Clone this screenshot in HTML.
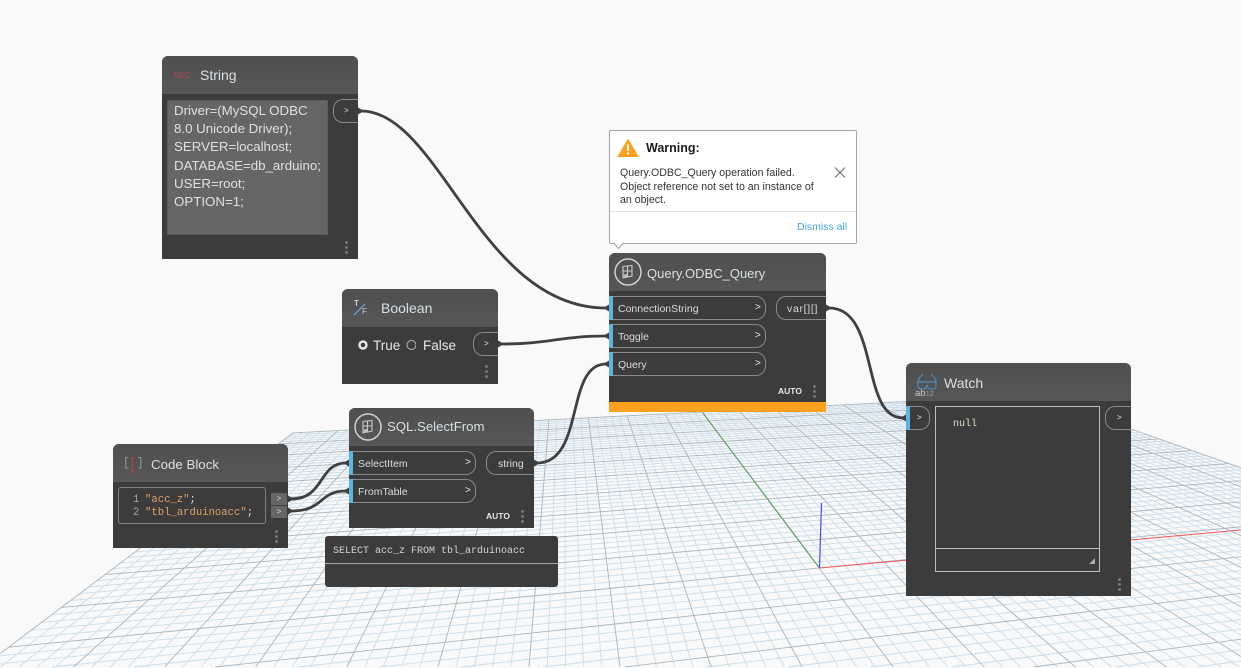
<!DOCTYPE html>
<html><head><meta charset="utf-8">
<style>
html,body{margin:0;padding:0;background:#f9f9f9;width:1241px;height:668px;overflow:hidden}
#r{position:relative;width:1241px;height:668px;overflow:hidden;background:#f9f9f9;font-family:"Liberation Sans",sans-serif}
svg.full{position:absolute;left:0;top:0}
.n{position:absolute;background:#3c3c3c}
.h{position:absolute;left:0;right:0;top:0;height:38px;background:linear-gradient(#4f4f4f,#575757);border-radius:6px 6px 0 0}
.t{position:absolute;white-space:nowrap;line-height:16px;height:16px;color:#d6dde2}
.title{font-size:14px;color:#d9dfe3}
.m{font-family:"Liberation Mono",monospace}
.p{position:absolute;box-sizing:border-box;border:1px solid #8a8a8a;height:24px;background:#3c3c3c}
.in{border-left:0;border-radius:0 10px 10px 0}
.in:before{content:"";position:absolute;left:0;top:-1px;bottom:-1px;width:4px;background:#5cb4e2}
.out{border-right:0;border-radius:10px 0 0 10px}
.p span{position:absolute;white-space:nowrap;color:#d8dde0;font-size:10.5px;line-height:24px;top:0}
.p i{position:absolute;font-style:normal;color:#e4e4e4;font-size:10px;line-height:22px;top:0}
.d{position:absolute;width:3px;height:3px;border-radius:50%;background:#777;box-shadow:0 5px 0 #777,0 10px 0 #777}
.auto{position:absolute;color:#e6e6e6;font-size:8.5px;font-weight:bold;line-height:10px}
</style></head>
<body><div id="r">
<svg class="full" id="g" width="1241" height="668" viewBox="0 0 1241 668" fill="none"></svg>
<svg class="full" width="1241" height="668" viewBox="0 0 1241 668" fill="none">
<path d="M819.5 568L703 413" stroke="#4f9a4f" stroke-width="1"/>
<path d="M819.5 568L1241 530" stroke="#f4565a" stroke-width="1"/>
<path d="M819.5 568L821.5 503" stroke="#4a4ae8" stroke-width="1.2"/>
</svg>

<div class="n" style="left:162px;top:56px;width:196px;height:203px;border-radius:6px 6px 0 0">
<div class="h"></div>
<div class="t" style="left:10px;top:11px;font-size:8.5px;font-weight:bold;color:#8e4d50">ABC</div>
<div class="t title" style="left:38px;top:11px;font-size:14px">String</div>
<div style="position:absolute;left:5px;top:44px;width:161px;height:135px;box-sizing:border-box;background:#666;border:1px solid #5b5b5b"></div>
<div style="position:absolute;left:12px;top:46px;font-size:13.3px;line-height:18.2px;color:#dde0e2;white-space:nowrap">Driver=(MySQL ODBC<br>8.0 Unicode Driver);<br>SERVER=localhost;<br>DATABASE=db_arduino;<br>USER=root;<br>OPTION=1;</div>
<div class="p out" style="left:171px;top:43px;width:25px"><i style="left:10px;font-size:8px">&gt;</i></div>
<div class="d" style="left:183px;top:185px"></div>
</div>

<div style="position:absolute;left:609px;top:130px;width:248px;height:114px;box-sizing:border-box;background:#fff;border:1px solid #a3a3a3;border-radius:2px"></div>
<svg class="full" width="1241" height="668" viewBox="0 0 1241 668" fill="none">
<path d="M614 243.5L618.5 248.5L623 243.5" fill="#fff" stroke="#a3a3a3"/><path d="M615 243h7v1h-7z" fill="#fff"/>
<path d="M628 139.5L638 156.5H618Z" fill="#fca21f" stroke="#fca21f" stroke-linejoin="round"/>
<path d="M628 144.5v6.5M628 152.5v2" stroke="#fff" stroke-width="2"/>
<path d="M835 167.5L845 177.5M845 167.5L835 177.5" stroke="#666" stroke-width="1"/>
<path d="M610 211.5H856" stroke="#e2e2e2"/>
</svg>
<div class="t" style="left:646px;top:140px;font-size:12.5px;font-weight:bold;color:#1c1c1c">Warning:</div>
<div style="position:absolute;left:620px;top:167px;font-size:10.6px;line-height:13.6px;color:#333;white-space:nowrap">Query.ODBC_Query operation failed.<br>Object reference not set to an instance of<br>an object.</div>
<div class="t" style="left:797px;top:219px;font-size:10.5px;color:#4aa5e0">Dismiss all</div>

<div class="n" style="left:609px;top:253px;width:217px;height:159px;border-radius:6px 6px 0 0">
<div class="h"></div>
<svg style="position:absolute;left:5px;top:5px" width="28" height="28" viewBox="0 0 28 28" fill="none"><circle cx="14" cy="14" r="13" stroke="#d0d0d0" stroke-width="1.5"/><path d="M9 8.5L18 7.5V18L9 20ZM13.5 8V19M9 13H18" stroke="#c9c9c9" stroke-width="1.1"/><path d="M9 16.5L13 16V19.5L9 20Z" fill="#bbb"/></svg>
<div class="t title" style="left:38px;top:13px;font-size:13px">Query.ODBC_Query</div>
<div class="p in" style="left:0;top:43px;width:157px"><span style="left:9px">ConnectionString</span><i style="left:146px">&gt;</i></div>
<div class="p in" style="left:0;top:71px;width:157px"><span style="left:9px">Toggle</span><i style="left:146px">&gt;</i></div>
<div class="p in" style="left:0;top:99px;width:157px"><span style="left:9px">Query</span><i style="left:146px">&gt;</i></div>
<div class="p out" style="left:167px;top:43px;width:50px"><span style="left:10px;letter-spacing:.7px">var[][]</span></div>
<div class="auto" style="left:169px;top:133px">AUTO</div>
<div class="d" style="left:204px;top:132px"></div>
<div style="position:absolute;left:0;right:0;bottom:0;height:10px;background:#fca21f"></div>
</div>

<div class="n" style="left:342px;top:289px;width:156px;height:95px;border-radius:6px 6px 0 0">
<div class="h"></div>
<div class="t" style="left:12px;top:7px;font-size:8px;font-weight:bold;color:#ccc">T</div>
<svg style="position:absolute;left:10px;top:9px" width="24" height="24" fill="none"><path d="M2 17L13 6" stroke="#6d9ec0" stroke-width="1.3"/></svg>
<div class="t" style="left:20px;top:15px;font-size:8px;font-weight:bold;color:#aaa">F</div>
<div class="t title" style="left:39px;top:11px">Boolean</div>
<svg style="position:absolute;left:14px;top:48px" width="60" height="16" fill="none"><circle cx="7" cy="8" r="3.5" stroke="#e6e6e6" stroke-width="2.4"/><circle cx="55.5" cy="8" r="4.5" stroke="#bbb"/></svg>
<div class="t" style="left:31px;top:49px;font-size:13.5px;color:#e2e6e9">True</div>
<div class="t" style="left:81px;top:49px;font-size:13.5px;color:#e2e6e9">False</div>
<div class="p out" style="left:131px;top:43px;width:25px"><i style="left:10px;font-size:8px">&gt;</i></div>
<div class="d" style="left:143px;top:76px"></div>
</div>

<div class="n" style="left:113px;top:444px;width:175px;height:104px;border-radius:6px 6px 0 0">
<div class="h"></div>
<div class="t m" style="left:10px;top:12px;font-size:11.5px;color:#9a9a9a">[ ]</div>
<svg style="position:absolute;left:14px;top:10px" width="12" height="20" fill="none"><path d="M5.5 4V18M3.5 4H7.5M3.5 18H7.5" stroke="#b04347" stroke-width="1.2"/></svg>
<div class="t title" style="left:38px;top:13px;font-size:13.3px">Code Block</div>
<div style="position:absolute;left:5px;top:43px;width:148px;height:37px;box-sizing:border-box;border:1px solid #808080;border-radius:3px"></div>
<div style="position:absolute;left:20px;top:50px;font:10.6px/13px 'Liberation Mono',monospace;color:#a5a5a5;white-space:pre;text-align:right">1<br>2</div>
<div style="position:absolute;left:32px;top:50px;font:10.6px/13px 'Liberation Mono',monospace;color:#e0a066;white-space:pre">"acc_z"<span style="color:#ddd">;</span><br>"tbl_arduinoacc"<span style="color:#ddd">;</span></div>
<div style="position:absolute;left:158px;top:49px;width:16px;height:12px;background:#666;color:#ddd;font-size:8px;line-height:11px;text-align:center">&gt;</div>
<div style="position:absolute;left:158px;top:62px;width:16px;height:12px;background:#666;color:#ddd;font-size:8px;line-height:11px;text-align:center">&gt;</div>
<div class="d" style="left:162px;top:86px"></div>
</div>

<div class="n" style="left:349px;top:408px;width:185px;height:120px;border-radius:6px 6px 0 0">
<div class="h"></div>
<svg style="position:absolute;left:5px;top:5px" width="28" height="28" viewBox="0 0 28 28" fill="none"><circle cx="14" cy="14" r="13" stroke="#d0d0d0" stroke-width="1.5"/><path d="M9 8.5L18 7.5V18L9 20ZM13.5 8V19M9 13H18" stroke="#c9c9c9" stroke-width="1.1"/><path d="M9 16.5L13 16V19.5L9 20Z" fill="#bbb"/></svg>
<div class="t title" style="left:38px;top:11px;font-size:13.2px">SQL.SelectFrom</div>
<div class="p in" style="left:0;top:43px;width:127px"><span style="left:9px">SelectItem</span><i style="left:116px">&gt;</i></div>
<div class="p in" style="left:0;top:71px;width:127px"><span style="left:9px">FromTable</span><i style="left:116px">&gt;</i></div>
<div class="p out" style="left:137px;top:43px;width:48px"><span style="left:11px">string</span></div>
<div class="auto" style="left:137px;top:103px">AUTO</div>
<div class="d" style="left:172px;top:102px"></div>
</div>

<div class="n" style="left:325px;top:536px;width:233px;height:51px;border-radius:3px">
<div class="t m" style="left:8px;top:8px;font-size:10px;color:#cfd5d9">SELECT acc_z FROM tbl_arduinoacc</div>
<div style="position:absolute;left:0;right:0;top:27px;height:1px;background:#a5a5a5"></div>
</div>

<div class="n" style="left:906px;top:363px;width:225px;height:233px;border-radius:6px 6px 0 0">
<div class="h"></div>
<svg style="position:absolute;left:9px;top:8px" width="26" height="28" viewBox="0 0 26 28" fill="none"><path d="M3 13C3 8 5 5 8 3M21 13C21 8 19 5 16 3M2 11H22M3 11V15Q3 18 6 18H9Q11 18 12 14Q13 18 15 18H18Q21 18 21 15V11" stroke="#4f88b8" stroke-width="1.2"/></svg>
<div class="t" style="left:9px;top:25px;font-size:9.5px;color:#c9c9c9;line-height:12px">ab<span style="font-size:7.5px;color:#9a9a9a">12</span></div>
<div class="t title" style="left:38px;top:12px">Watch</div>
<div class="p in" style="left:0;top:43px;width:24px"><i style="left:11px;font-size:8px">&gt;</i></div>
<div class="p out" style="left:199px;top:43px;width:26px"><i style="left:11px;font-size:8px">&gt;</i></div>
<div style="position:absolute;left:29px;top:43px;width:165px;height:166px;box-sizing:border-box;border:1px solid #bdbdbd"></div>
<div style="position:absolute;left:29px;top:185px;width:165px;height:1px;background:#bdbdbd"></div>
<div class="t m" style="left:47px;top:54px;font-size:10px;color:#e0dcc8">null</div>
<svg style="position:absolute;left:183px;top:195px" width="7" height="7"><path d="M6 0V6H0Z" fill="#aaa"/></svg>
<div class="d" style="left:212px;top:215px"></div>
</div>

<svg class="full" width="1241" height="668" viewBox="0 0 1241 668" fill="none">
<g stroke="#404040" stroke-width="2.8">
<path d="M361 111C440 111 480 308 606 308"/>
<path d="M501 344C550 344 560 336 606 336"/>
<path d="M537 463C585 463 565 364 606 364"/>
<path d="M829 308C880 308 860 418 903 418"/>
<path d="M291 499C325 499 318 463 346 463"/>
<path d="M291 511C325 511 318 491 346 491"/>
</g>
<g fill="#404040">
<path d="M358 107.5L364 111L358 114.5ZM498 340.5L504 344L498 347.5ZM534 459.5L540 463L534 466.5ZM826 304.5L832 308L826 311.5ZM288 495.5L294 499L288 502.5ZM288 507.5L294 511L288 514.5Z"/>
<path d="M609 304.5L603 308L609 311.5ZM609 332.5L603 336L609 339.5ZM609 360.5L603 364L609 367.5ZM906 414.5L900 418L906 421.5ZM349 459.5L343 463L349 466.5ZM349 487.5L343 491L349 494.5Z"/>
</g>
</svg>
</div>
<script>
(function(){
var a=812,b=479.7,c=819,d=43.4,e=194.2,f=568,g=0.1894,h=0.85,B=667;
function P(u,v){var w=g*u+h*v+1;return ((a*u+b*v+c)/w).toFixed(1)+" "+((d*u+e*v+f)/w).toFixed(1);}
var minor="",major="";
for(var i=-50;i<=50;i++){
 var t=i/50,s="";
 var v0=(d*t+f-B*g*t-B)/(B*h-e);
 if(v0<1)s+="M"+P(t,Math.max(v0,-1))+"L"+P(t,1);
 var u0=(e*t+f-B*h*t-B)/(B*g-d);
 if(u0<1)s+="M"+P(Math.max(u0,-1),t)+"L"+P(1,t);
 if(i%5===0)major+=s;else minor+=s;
}
document.getElementById("g").innerHTML='<path d="'+minor+'" stroke="#cbdde9" stroke-width="0.9"/><path d="'+major+'" stroke="#a9b6be" stroke-width="0.9"/>';
})();
</script>
</body></html>
